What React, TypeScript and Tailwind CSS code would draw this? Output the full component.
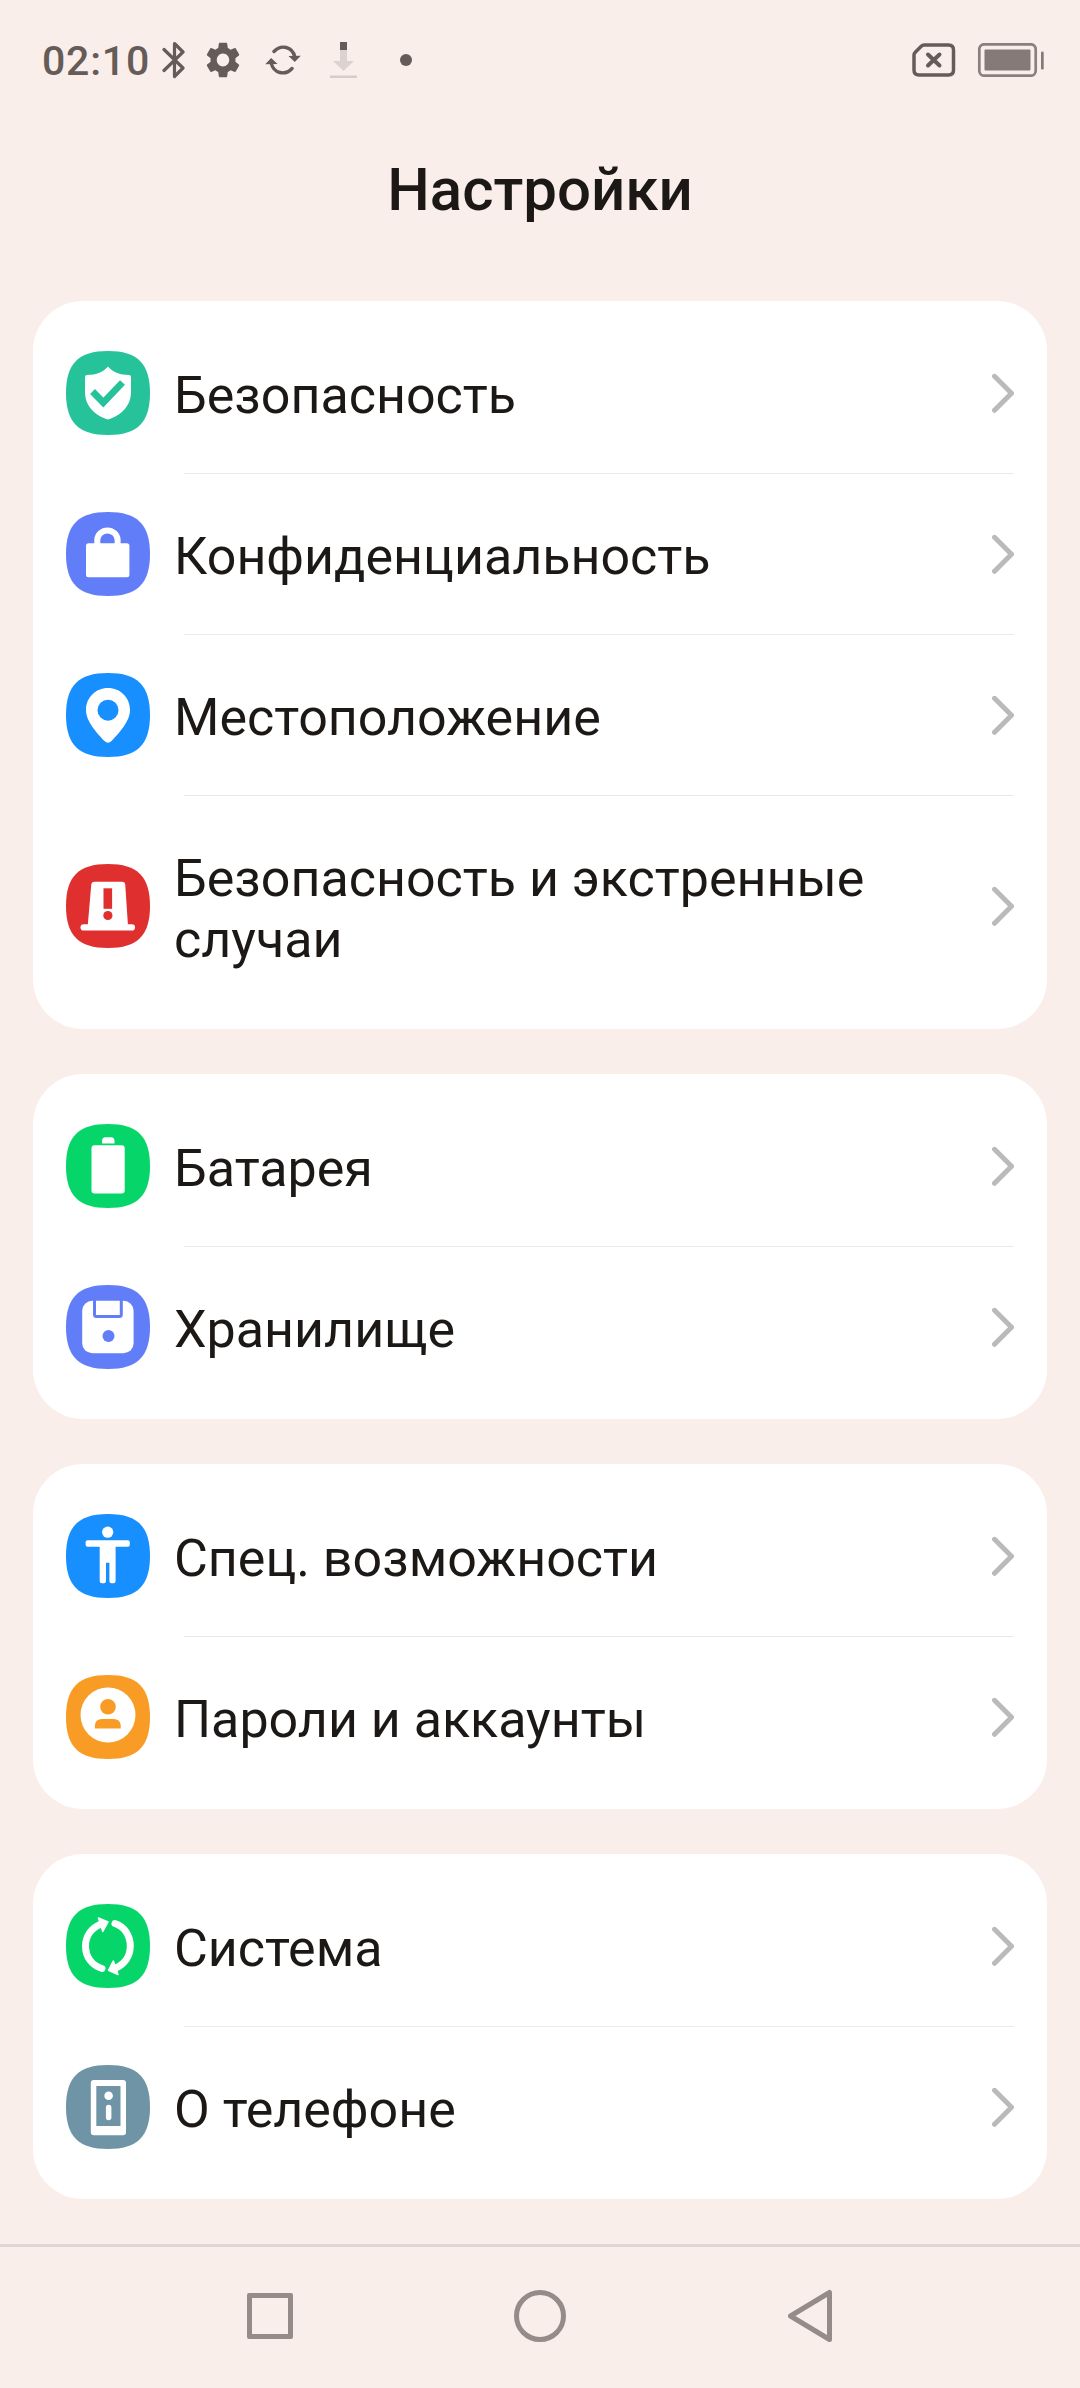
import type { ReactNode } from 'react';

type Item = {
  label: string;
  color: string;
  glyph: ReactNode;
  tall?: boolean;
};

// Rounded tile that sits behind every glyph, on an 84x84 grid
const TILE = 'M42 0C71.500 0 84 12.500 84 42S71.500 84 42 84 0 71.500 0 42 12.500 0 42 0Z';

const groups: Item[][] = [
  [
    {
      label: 'Безопасность',
      color: '#26c29a',
      glyph: (
        <>
          <path
            d="M42 15.5C46 20.5 54 24 63 24Q65 24 65 26V41C65 55 55 64.500 42 68.500C29 64.500 19 55 19 41V26Q19 24 21 24C30 24 38 20.500 42 15.500Z"
            fill="#fff"
          />
          <path d="M26.500 40.500L37.300 51.500L56.500 31.500" fill="none" stroke="#26c29a" strokeWidth="6.800" />
        </>
      ),
    },
    {
      label: 'Конфиденциальность',
      color: '#617df8',
      glyph: (
        <>
          <rect x="20" y="31.300" width="43.400" height="34" rx="2.500" fill="#fff" />
          <path d="M31.300 33V27.500A10.200 10 0 0 1 51.600 27.500V33" fill="none" stroke="#fff" strokeWidth="6" />
        </>
      ),
    },
    {
      label: 'Местоположение',
      color: '#188fff',
      glyph: (
        <>
          <path
            d="M42 15C29.500 15 20 24.700 20 37C20 49 32 61 38.500 68Q42 71.500 45.500 68C52 61 64 49 64 37C64 24.700 54.500 15 42 15Z"
            fill="#fff"
          />
          <circle cx="42" cy="37.200" r="10.500" fill="#188fff" />
        </>
      ),
    },
    {
      label: 'Безопасность и экстренные случаи',
      color: '#df302f',
      tall: true,
      glyph: (
        <>
          <path d="M28 17.700H56.500Q59 17.700 59.200 20.200L62 62H21.700L25.300 20.200Q25.500 17.700 28 17.700Z" fill="#fff" />
          <rect x="14.500" y="60.300" width="54.500" height="6.200" rx="3.100" fill="#fff" />
          <rect x="37.500" y="24.300" width="8.600" height="20.500" fill="#df302f" />
          <circle cx="41.900" cy="51.500" r="4.600" fill="#df302f" />
        </>
      ),
    },
  ],
  [
    {
      label: 'Батарея',
      color: '#06d66a',
      glyph: (
        <>
          <path d="M36 19.500V17Q36 13.200 39.500 13.200H45Q48.500 13.200 48.500 17V19.500Z" fill="#fff" />
          <rect x="25.500" y="21.300" width="33.200" height="48.200" rx="3" fill="#fff" />
        </>
      ),
    },
    {
      label: 'Хранилище',
      color: '#617df8',
      glyph: (
        <>
          <rect x="16.200" y="15.700" width="51.400" height="52.500" rx="10" fill="#fff" />
          <path d="M28.500 15V29.500Q28.500 31.500 30.500 31.500H53.300Q55.300 31.500 55.300 29.500V15" fill="none" stroke="#617df8" strokeWidth="3" />
          <circle cx="42.500" cy="51" r="6" fill="#617df8" />
        </>
      ),
    },
  ],
  [
    {
      label: 'Спец. возможности',
      color: '#188fff',
      glyph: (
        <g fill="#fff">
          <circle cx="41.700" cy="18.200" r="5.600" />
          <rect x="19.600" y="26.300" width="44.200" height="6.400" rx="2" />
          <path d="M33.700 30H49.600V67Q49.600 69.200 47.400 69.200H45.500Q43.400 69.200 43.400 67V48.700H40V67Q40 69.200 37.900 69.200H35.900Q33.700 69.200 33.700 67Z" />
        </g>
      ),
    },
    {
      label: 'Пароли и аккаунты',
      color: '#f89c26',
      glyph: (
        <>
          <circle cx="42" cy="40" r="27.500" fill="#fff" />
          <circle cx="42" cy="31.800" r="7.800" fill="#f89c26" />
          <path d="M28.900 53.400V50Q29.500 44 36 44H47.500Q54 44 54.700 50V53.400Z" fill="#f89c26" />
        </>
      ),
    },
  ],
  [
    {
      label: 'Система',
      color: '#06d66a',
      glyph: (
        <>
          <path
            d="M36 64.500C26 61.500 19.500 53 19.500 42C19.500 32 25.500 24 35 20M49 19.500C58 22.500 64.300 31 64.300 42C64.300 52 58.500 60 50 64"
            fill="none"
            stroke="#fff"
            strokeWidth="7"
            strokeLinecap="round"
          />
          <path
            d="M32.500 14L42 18L36.800 27.500ZM52 70.500L42.500 66.300L47.300 57Z"
            fill="#fff"
            stroke="#fff"
            strokeWidth="1.500"
            strokeLinejoin="round"
          />
        </>
      ),
    },
    {
      label: 'О телефоне',
      color: '#6f94a6',
      glyph: (
        <g fill="#fff">
          <path
            fillRule="evenodd"
            d="M27.800 15H57Q60 15 60 18V67.300Q60 70.300 57 70.300H27.800Q24.800 70.300 24.800 67.300V18Q24.800 15 27.800 15ZM30.300 21V61H54.500V21Z"
          />
          <circle cx="42.600" cy="30.700" r="4.300" />
          <rect x="39.900" y="39.800" width="5.500" height="15.400" rx="2.700" />
        </g>
      ),
    },
  ],
];

function StatusBar() {
  return (
    <header className="flex h-[120px] items-center justify-between pl-[42px] pr-[35px] text-[#655b58]">
      <div className="flex items-center">
        <span className="w-[120px] pt-[2px] text-[41px] font-medium leading-[48px] tracking-[0.8px]">02:10</span>
        <svg className="h-[40px] w-[24px]" viewBox="0 0 24 40" fill="none" stroke="currentColor" strokeWidth="3.2">
          <path d="M2 9.500L21 28L12.500 36.500V3.500L21 12L2 30.500" strokeLinejoin="round" strokeLinecap="round" />
        </svg>
        <svg className="ml-5 h-[36px] w-[34px]" viewBox="2.200 2 19.600 20" preserveAspectRatio="none" fill="currentColor">
          <path d="M19.140 12.940c.040-.300.060-.610.060-.940 0-.320-.020-.640-.070-.940l2.030-1.580c.180-.140.230-.410.120-.610l-1.920-3.320c-.120-.220-.370-.290-.590-.220l-2.390.960c-.500-.380-1.030-.700-1.620-.940l-.360-2.540c-.040-.240-.240-.410-.480-.410h-3.840c-.240 0-.430.170-.470.410l-.360 2.540c-.590.240-1.130.570-1.620.940l-2.390-.960c-.220-.080-.470 0-.590.220L2.740 8.870c-.120.210-.080.470.120.610l2.030 1.580c-.050.300-.090.630-.090.940s.020.640.070.940l-2.030 1.580c-.180.140-.230.410-.120.610l1.920 3.320c.120.220.370.290.590.220l2.390-.960c.500.380 1.030.700 1.620.940l.360 2.540c.050.240.240.410.480.410h3.840c.240 0 .440-.170.470-.410l.360-2.540c.590-.240 1.130-.560 1.620-.940l2.390.960c.220.080.470 0 .590-.220l1.920-3.320c.120-.220.070-.470-.120-.610l-2.010-1.580zM12 15.600c-1.980 0-3.600-1.620-3.600-3.600s1.620-3.600 3.600-3.600 3.600 1.620 3.600 3.600-1.620 3.600-3.600 3.600z" />
        </svg>
        <svg className="ml-[25px] h-[32px] w-[36px]" viewBox="0 0 36 32">
          <path
            d="M9 7.500C16 0 27.500 2.500 29.800 13M27 24.500C20 32 8.500 29.500 6.200 19"
            fill="none"
            stroke="currentColor"
            strokeWidth="3.4"
            strokeLinecap="round"
          />
          <path d="M23.500 12L35.800 11.700L29.800 18ZM12.500 20L.2 20.300L6.200 14Z" fill="currentColor" />
        </svg>
        <svg className="ml-[28px] h-[38px] w-[29px]" viewBox="0 0 29 38">
          <path d="M11 9H18V20H25L14.500 30L4 20H11Z" fill="#dcd2cf" />
          <path d="M11 1H18V9H11Z" fill="currentColor" />
          <path d="M1 34.500H28V37H1Z" fill="#d6ccc9" />
        </svg>
        <span className="ml-[42px] size-3 rounded-full bg-current" />
      </div>
      <div className="flex items-center gap-[21px]">
        <svg className="h-[34px] w-[44px]" viewBox="0 0 44 34" fill="none" stroke="currentColor">
          <path
            d="M12 2H36.500Q41.500 2 41.500 7V27Q41.500 32 36.500 32H7Q2 32 2 27V12Q2 10.500 3.500 9L9 3.500Q10.500 2 12 2Z"
            strokeWidth="3.500"
          />
          <path d="M16 11.500L27.500 22.500M27.500 11.500L16 22.500" strokeWidth="4" strokeLinecap="round" />
        </svg>
        <svg className="h-[34px] w-[68px]" viewBox="0 0 68 34">
          <rect x="2.300" y="1.300" width="56.400" height="31.400" rx="5" fill="none" stroke="#8a7f7c" strokeWidth="2.700" />
          <rect x="7.500" y="6.500" width="46" height="21" rx="1" fill="#857a78" />
          <rect x="64" y="8.500" width="2.700" height="18" rx="1.300" fill="#857a78" />
        </svg>
      </div>
    </header>
  );
}

function SettingsRow({ item }: { item: Item }) {
  return (
    <a className={`flex items-center px-[33px] ${item.tall ? 'h-[221px] pb-px' : 'h-[160px]'}`}>
      <svg className="size-[84px] shrink-0" viewBox="0 0 84 84">
        <path d={TILE} fill={item.color} />
        {item.glyph}
      </svg>
      <span className={`ml-6 w-[740px] text-[52px] leading-[61px] ${item.tall ? 'pt-1.5' : 'pt-1'}`}>{item.label}</span>
      <svg
        className="ml-auto h-[40px] w-[22px] shrink-0"
        viewBox="0 0 22 40"
        fill="none"
        stroke="#bababa"
        strokeWidth="5"
        strokeLinecap="round"
        strokeLinejoin="round"
      >
        <path d="M2.500 3.300L19.500 20.300L2.500 37.300" />
      </svg>
    </a>
  );
}

function NavBar() {
  return (
    <nav className="mt-[45px] grid h-[144px] grid-cols-3 items-center justify-items-center border-t-[3px] border-[#dfd5d2] px-[135px] pb-[3px]">
      <span className="size-[46px] rounded-[2px] border-[5px] border-[#958c89]" />
      <span className="size-[52px] rounded-full border-[5px] border-[#958c89]" />
      <svg className="h-[54px] w-[46px]" viewBox="0 0 46 54" fill="none" stroke="#958c89" strokeWidth="5" strokeLinejoin="round">
        <path d="M42.500 3.500V50.500L3.500 27Z" />
      </svg>
    </nav>
  );
}

export default function App() {
  return (
    <div className="flex h-[2388px] w-[1080px] flex-col bg-[#faeeeb] font-['Roboto',sans-serif] text-[#1c1816]">
      <StatusBar />
      <h1 className="h-[181px] pt-[35px] text-center text-[60px] font-medium leading-[70px]">Настройки</h1>

      <main className="flex flex-col gap-[45px] px-[33px]">
        {groups.map((items) => (
          <section key={items[0].label} className="rounded-[50px] bg-white py-3">
            {items.map((item, i) => (
              <div key={item.label}>
                {i > 0 && <div className="ml-[151px] mr-[33px] h-px bg-[#e9e9e9]" />}
                <SettingsRow item={item} />
              </div>
            ))}
          </section>
        ))}
      </main>

      <NavBar />
    </div>
  );
}
